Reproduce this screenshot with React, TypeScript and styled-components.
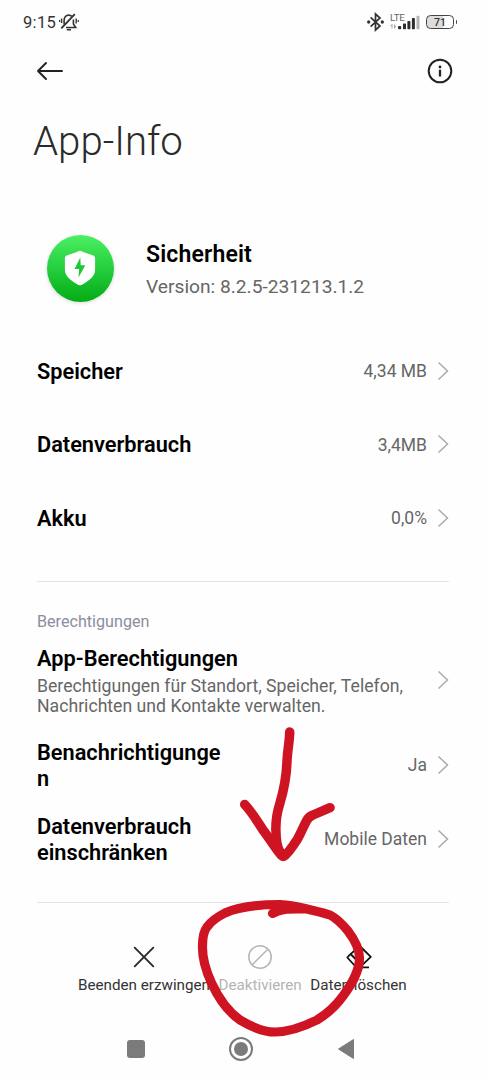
import React from "react";
import styled, { createGlobalStyle } from "styled-components";

const GlobalStyle = createGlobalStyle`
  * { box-sizing: border-box; }
  body { margin: 0; background: #fefefe; font-family: Roboto, "Liberation Sans", sans-serif; }
`;

const Screen = styled.div`
  position: relative;
  width: 486px;
  height: 1080px;
  overflow: hidden;
  background: #fefefe;
  display: flex;
  flex-direction: column;
`;

const StatusBar = styled.header`
  height: 44px;
  flex: none;
  display: flex;
  align-items: center;
  justify-content: space-between;
  padding: 0 32px 0 23px;
`;

const StatusGroup = styled.div<{ $gap: number }>`
  display: flex;
  align-items: center;
  gap: ${(p) => p.$gap}px;
`;

const Clock = styled.span`
  font-size: 16.5px;
  letter-spacing: 0.35px;
  line-height: 20px;
  color: #333;
  padding-top: 1px;
`;

const Signal = styled.div`
  display: flex;
  width: 30px;
  height: 18px;
  position: relative;
`;

const NetworkType = styled.span`
  position: absolute;
  left: 0;
  top: -1px;
  font-size: 9.8px;
  line-height: 11px;
  letter-spacing: -0.3px;
  color: #666;
`;

const Battery = styled.div`
  width: 28px;
  height: 14px;
  border: 1.5px solid #444;
  border-radius: 4.5px;
  background: linear-gradient(90deg, #ddd 60%, #fefefe 60%);
  display: flex;
  align-items: center;
  justify-content: center;
  font-size: 10.5px;
  font-weight: 500;
  line-height: 12px;
  padding-top: 1px;
  color: #333;
  position: relative;

  &::after {
    content: "";
    position: absolute;
    right: -4px;
    top: 3.5px;
    width: 1.5px;
    height: 4px;
    border-radius: 0 1px 1px 0;
    background: #444;
  }
`;

const Toolbar = styled.nav`
  height: 54px;
  flex: none;
  display: flex;
  align-items: center;
  justify-content: space-between;
  padding: 0 33px 0 36px;
`;

const IconButton = styled.button`
  border: 0;
  padding: 0;
  background: none;
  display: flex;
`;

const Title = styled.h1`
  margin: 20px 0 0 33px;
  font-size: 40.2px;
  font-weight: 300;
  line-height: 48px;
  color: #2a2a2a;
`;

const AppHeader = styled.section`
  margin-top: 64px;
  height: 76px;
  flex: none;
  display: flex;
  align-items: center;
  padding-left: 46.5px;
`;

const AppIcon = styled.div`
  width: 67px;
  height: 67px;
  border-radius: 50%;
  display: flex;
  align-items: center;
  justify-content: center;
  background: linear-gradient(180deg, #4bf063 0%, #2ad443 42%, #03ab14 100%);
  box-shadow: 0 1px 3px 1px rgba(0, 0, 0, 0.1);
  margin-right: 32.5px;
`;

const AppText = styled.div`
  padding-top: 5px;
`;

const AppName = styled.div`
  font-size: 23px;
  font-weight: 600;
  letter-spacing: 0.15px;
  line-height: 32px;
  color: #000;
`;

const AppVersion = styled.div`
  font-size: 19.2px;
  line-height: 32px;
  color: #666;
`;

const List = styled.section<{ $top: number }>`
  margin: ${(p) => p.$top}px 37px 0;
`;

const Row = styled.div<{ $height: number }>`
  height: ${(p) => p.$height}px;
  display: flex;
  align-items: center;
  justify-content: space-between;
`;

const RowTitle = styled.div<{ $width?: number }>`
  font-size: 21.75px;
  font-weight: 600;
  line-height: 26px;
  padding-top: 2px;
  color: #000;
  ${(p) => (p.$width ? `width: ${p.$width}px; word-break: break-all;` : "")}
`;

const RowEnd = styled.div`
  display: flex;
  align-items: center;
  gap: 10px;
  font-size: 17.5px;
  line-height: 24px;
  color: #666;
`;

const RowValue = styled.span`
  padding-top: 1px;
`;

const Summary = styled.div`
  font-size: 17.65px;
  line-height: 20.5px;
  margin-top: 4px;
  color: #666;
`;

const Divider = styled.hr<{ $top: number }>`
  margin: ${(p) => p.$top}px 37px 0;
  border: 0;
  height: 1px;
  flex: none;
  background: #e4e4e4;
`;

const SectionLabel = styled.h2`
  margin: 29px 37px 0;
  font-size: 16.15px;
  font-weight: 400;
  line-height: 22px;
  color: #8a8d9f;
`;

const Actions = styled.footer`
  margin-top: 40px;
  padding-left: 78px;
  display: flex;
  gap: 8.6px;
  flex: none;
`;

const Action = styled.button<{ $disabled?: boolean }>`
  border: 0;
  padding: 0;
  background: none;
  display: flex;
  flex-direction: column;
  align-items: center;
  gap: 3px;
  font-family: inherit;
  font-size: 15.2px;
  line-height: 22px;
  white-space: nowrap;
  color: ${(p) => (p.$disabled ? "#b4b4b4" : "#333")};
`;

const SystemNav = styled.nav`
  margin-top: 40px;
  padding-left: 127px;
  height: 26px;
  flex: none;
  display: flex;
  align-items: center;
`;

const RecentsKey = styled.span`
  width: 18px;
  height: 18px;
  border-radius: 3px;
  background: #7b7b7b;
  margin-right: 84px;
`;

const HomeKey = styled.span`
  width: 24px;
  height: 24px;
  border-radius: 50%;
  border: 2px solid #7b7b7b;
  display: flex;
  align-items: center;
  justify-content: center;
  margin-right: 84px;

  &::before {
    content: "";
    width: 14px;
    height: 14px;
    border-radius: 50%;
    background: #7b7b7b;
  }
`;

const Marker = styled.svg`
  position: absolute;
  left: 0;
  top: 0;
  pointer-events: none;
`;

const Chevron = () => (
  <svg width="12" height="20" viewBox="0 0 12 20" fill="none" stroke="#aaa" strokeWidth="1.5">
    <path d="M1.5 1.5 10.5 10 1.5 18.5" />
  </svg>
);

const MutedBell = () => (
  <svg width="20" height="18" viewBox="0 0 20 18" fill="none" stroke="#333" strokeWidth="1.6">
    <path d="M5.100 11.500V7.200C5.100 4.200 7 2.100 9.700 2.100c1.300 0 2.400.5 3.200 1.300M14.400 6.500v4.500l2.300 3.500H7" />
    <path d="M2.300 15.300 15.800 1.200" strokeWidth="1.900" />
    <path d="M7.800 16.700h4.200" />
    <path d="M2.600 5.500v4.500M17.200 5.500v5" strokeWidth="1.400" />
    <path d="M.6 7v2M19.300 7v2" strokeWidth="1.200" />
  </svg>
);

const BluetoothIcon = () => (
  <svg width="17" height="20" viewBox="0 0 17 20" fill="none" stroke="#333" strokeWidth="1.7">
    <path d="M3.600 5.400 13 14 8.500 18V2L13 6 3.600 14.600" />
    <circle cx="1.700" cy="10" r=".8" fill="#333" />
    <circle cx="15.300" cy="10" r=".8" fill="#333" />
  </svg>
);

const SignalBars = () => (
  <svg width="30" height="18" viewBox="0 0 30 18">
    <g fill="#2d2d2d">
      <rect x="8" y="13" width="3.200" height="3.200" rx="1" />
      <rect x="13" y="10.500" width="3" height="5.700" rx=".7" />
      <rect x="17.400" y="8" width="3" height="8.200" rx=".7" />
      <rect x="21.900" y="5" width="3" height="11.200" rx=".7" />
    </g>
    <rect x="26.500" y="2.800" width="3" height="13.400" rx=".7" fill="#b5b5b5" />
    <path d="M2 11.500v4M.5 13 2 11.500M4.500 15.500v-4M6 13l-1.500 2" stroke="#999" strokeWidth=".9" fill="none" />
  </svg>
);

const settings = [
  ["Speicher", "4,34 MB"],
  ["Datenverbrauch", "3,4MB"],
  ["Akku", "0,0%"],
];

export default function App() {
  return (
    <>
      <GlobalStyle />
      <Screen>
        <StatusBar>
          <StatusGroup $gap={3}>
            <Clock>9:15</Clock>
            <MutedBell />
          </StatusGroup>
          <StatusGroup $gap={6}>
            <BluetoothIcon />
            <Signal>
              <NetworkType>LTE</NetworkType>
              <SignalBars />
            </Signal>
            <Battery>71</Battery>
          </StatusGroup>
        </StatusBar>

        <Toolbar>
          <IconButton aria-label="Zurück">
            <svg width="28" height="20" viewBox="0 0 28 20" fill="none" stroke="#222" strokeWidth="1.9" strokeLinecap="round" strokeLinejoin="round">
              <path d="M26 10H2M10 2 2 10l8 8" />
            </svg>
          </IconButton>
          <IconButton aria-label="Info">
            <svg width="26" height="26" viewBox="0 0 26 26" fill="none" stroke="#222" strokeWidth="2">
              <circle cx="13" cy="13" r="11.300" />
              <path d="M13 11.700v6.800" strokeWidth="2.300" />
              <circle cx="13" cy="9" r="1.400" fill="#222" stroke="none" />
            </svg>
          </IconButton>
        </Toolbar>

        <Title>App-Info</Title>

        <AppHeader>
          <AppIcon>
            <svg width="32" height="36" viewBox="0 0 32 36">
              <path d="M16 .8c.8 0 1.500.5 2.400.9l10.800 3.800c1.300.5 1.900 1.300 1.900 2.600v11.500c0 6-4.600 10.500-12.600 14.900-1.700 1-3.300 1-5 0C5.500 30.100.9 25.600.9 19.600V8.100c0-1.300.6-2.100 1.900-2.600l10.800-3.800C14.500 1.300 15.200.8 16 .8Z" fill="#fff" />
              <path d="M16.300 7.500 10.500 19h4.700l-.7 8.500 6.800-12.300h-4.600Z" fill="#20c837" />
            </svg>
          </AppIcon>
          <AppText>
            <AppName>Sicherheit</AppName>
            <AppVersion>Version: 8.2.5-231213.1.2</AppVersion>
          </AppText>
        </AppHeader>

        <List $top={28}>
          {settings.map(([name, value]) => (
            <Row $height={73.5} key={name}>
              <RowTitle>{name}</RowTitle>
              <RowEnd>
                <RowValue>{value}</RowValue>
                <Chevron />
              </RowEnd>
            </Row>
          ))}
        </List>

        <Divider $top={26} />
        <SectionLabel>Berechtigungen</SectionLabel>
        <List $top={0}>
          <Row $height={95}>
            <div>
              <RowTitle>App-Berechtigungen</RowTitle>
              <Summary>
                Berechtigungen für Standort, Speicher, Telefon,
                <br />
                Nachrichten und Kontakte verwalten.
              </Summary>
            </div>
            <Chevron />
          </Row>
          <Row $height={74.5}>
            <RowTitle $width={186}>Benachrichtigungen</RowTitle>
            <RowEnd>
              <RowValue>Ja</RowValue>
              <Chevron />
            </RowEnd>
          </Row>
          <Row $height={73.5}>
            <RowTitle>
              Datenverbrauch
              <br />
              einschränken
            </RowTitle>
            <RowEnd>
              <RowValue>Mobile Daten</RowValue>
              <Chevron />
            </RowEnd>
          </Row>
        </List>

        <Divider $top={26} />
        <Actions>
          <Action>
            <svg width="28" height="28" viewBox="0 0 28 28" stroke="#2a2a2a" strokeWidth="1.900" strokeLinecap="round">
              <path d="M4.700 4.700 23.300 23.300M23.300 4.700 4.700 23.300" />
            </svg>
            Beenden erzwingen
          </Action>
          <Action $disabled>
            <svg width="28" height="28" viewBox="0 0 28 28" fill="none" stroke="#b4b4b4" strokeWidth="1.500">
              <circle cx="14" cy="14" r="11.200" />
              <path d="M6.300 21.700 21.700 6.300" />
            </svg>
            Deaktivieren
          </Action>
          <Action>
            <svg width="28" height="28" viewBox="0 0 28 28" fill="none" stroke="#111" strokeWidth="1.800" strokeLinejoin="round">
              <path d="M12.500 24.300H24M10.500 23.500 2.300 14.500l2.400-2.600L14.800 3 25.800 13.800 15 24.200" />
              <path d="M6 11.500 15.500 21" />
            </svg>
            Daten löschen
          </Action>
        </Actions>

        <SystemNav>
          <RecentsKey />
          <HomeKey />
          <svg width="18" height="22" viewBox="0 0 18 22">
            <path d="M1.500 11 16.500 1.500v19Z" fill="#7b7b7b" stroke="#7b7b7b" strokeLinejoin="round" />
          </svg>
        </SystemNav>

        <Marker width="486" height="1080" viewBox="0 0 486 1080" fill="none" stroke="#ce1423" strokeLinecap="round" strokeLinejoin="round">
          <g strokeWidth="9.500">
            <path d="M289.700 732C289.500 742 287.500 750 287 761C286.500 778 283 793 279.700 804C276.500 814 275.700 821 275.900 830C276 840 277 847 280 852" />
            <path d="M244.700 804.500C252 812 257 821 263 830C270 839 275 848 281.500 855.500Q283 857 285 855.500C291 850 293 845 297 840C302 831 304 825 307 820Q309 816.500 313 815L330 807.700" />
          </g>
          <path
            strokeWidth="9.200"
            d="M272.500 913.500C280 909 286 908.500 307 909C315 911 322 912 330 915C338 919 343 925 348 931C354 939 359.500 948 359.500 958C359.500 972 351 985 343 996C335 1007 327 1014 317 1020C303 1027 288 1032 275 1032C262 1032 250 1026 240 1020C227 1011 218 997 211.500 983C206 971 202 960 202.500 946C202.500 938 203 932 207 927C212 920 218 916.500 225 913C238 907 256 904.500 280 904.500C292 905 299 907 307 909"
          />
        </Marker>
      </Screen>
    </>
  );
}
